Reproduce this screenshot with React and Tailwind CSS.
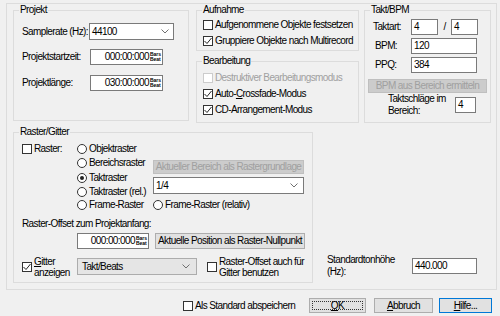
import React from "react";

function Check({ checked, disabled }) {
  return (
    <span
      className={`flex h-[10px] w-[10px] shrink-0 items-center justify-center border bg-white ${
        disabled ? "border-[#cccccc]" : "border-[#333333]"
      }`}
    >
      {checked && (
        <svg width="8" height="8" viewBox="0 0 8 8">
          <path d="M0.5 4 L3 6.5 L7.5 1" fill="none" stroke="#222222" strokeWidth="1" />
        </svg>
      )}
    </span>
  );
}

function Radio({ selected }) {
  return (
    <span className="flex h-[10px] w-[10px] shrink-0 items-center justify-center rounded-full border border-[#333333] bg-white">
      {selected && <span className="h-[4px] w-[4px] rounded-full bg-[#222222]" />}
    </span>
  );
}

function Chevron() {
  return (
    <svg width="8" height="5" viewBox="0 0 8 5">
      <path d="M0.5 0.5 L4 4 L7.5 0.5" fill="none" stroke="#707070" strokeWidth="1" />
    </svg>
  );
}

function TimeField({ value, className }) {
  return (
    <div className={`flex h-[16px] items-center justify-end border border-[#7a7a7a] bg-white pr-[1px] ${className}`}>
      <span>{value}</span>
      <span className="ml-[1px] flex flex-col text-[5px] font-bold leading-[5px] tracking-normal">
        <span>Bars</span>
        <span>Beat</span>
      </span>
    </div>
  );
}

function Input({ value, className }) {
  return (
    <div className={`flex h-[16px] items-center border border-[#7a7a7a] bg-white pl-[2px] ${className}`}>
      {value}
    </div>
  );
}

function Group({ title, className, children }) {
  return (
    <fieldset className={`shrink-0 border border-[#dcdcdc] p-0 ${className}`}>
      <legend className="ml-[5px] px-[1px] leading-[12px]">{title}</legend>
      {children}
    </fieldset>
  );
}

function CheckRow({ label, checked, disabled, className }) {
  return (
    <div className={`flex h-[16px] items-center gap-[2px] ${className || ""}`}>
      <Check checked={checked} disabled={disabled} />
      <span className={disabled ? "text-[#a0a0a0]" : ""}>{label}</span>
    </div>
  );
}

function RadioRow({ label, selected, className }) {
  return (
    <div className={`flex items-center gap-[2px] ${className}`}>
      <Radio selected={selected} />
      <span>{label}</span>
    </div>
  );
}

export default function App() {
  return (
    <div className="h-[316px] w-[500px] overflow-hidden bg-[#f0f0f0] pt-[3px] font-['Liberation_Sans',Arial,sans-serif] text-[10px] leading-[12px] tracking-[-0.6px] text-black">
      <div className="ml-[6px] h-[287px] w-[491px] border border-[#dcdcdc] pl-[6px]">
        {/* top row */}
        <div className="flex items-start">
          <Group title="Projekt" className="h-[117px] w-[176px]">
            <div className="pl-[8px]">
              <div className="mt-[7px] flex h-[17px] items-center">
                <span className="w-[67px]">Samplerate (Hz):</span>
                <div className="flex h-[17px] w-[85px] items-center justify-between border border-[#7a7a7a] bg-white pl-[2px] pr-[4px]">
                  <span>44100</span>
                  <Chevron />
                </div>
              </div>
              <div className="mt-[9px] flex h-[16px] items-center">
                <span className="w-[68px]">Projektstartzeit:</span>
                <TimeField value="000:00:000" className="w-[73px]" />
              </div>
              <div className="mt-[10px] flex h-[16px] items-center">
                <span className="w-[68px]">Projektlänge:</span>
                <TimeField value="030:00:000" className="w-[73px]" />
              </div>
            </div>
          </Group>

          <div className="ml-[7px] flex w-[163px] flex-col">
            <Group title="Aufnahme" className="h-[47px] w-[163px]">
              <div className="pl-[6px] pt-[1px]">
                <CheckRow label="Aufgenommene Objekte festsetzen" />
                <CheckRow label="Gruppiere Objekte nach Multirecord" checked />
              </div>
            </Group>
            <Group title="Bearbeitung" className="mt-[4px] h-[68px] w-[163px]">
              <div className="pl-[6px] pt-[3px]">
                <CheckRow label="Destruktiver Bearbeitungsmodus" disabled />
                <CheckRow
                  checked
                  label={
                    <>
                      Auto-<span className="underline">C</span>rossfade-Modus
                    </>
                  }
                />
                <CheckRow label="CD-Arrangement-Modus" checked />
              </div>
            </Group>
          </div>

          <Group title="Takt/BPM" className="ml-[5px] h-[119px] w-[126px]">
            <div className="px-[3px]">
              <div className="mt-[3px] flex h-[16px] items-center pl-[5px]">
                <span className="w-[38px]">Taktart:</span>
                <Input value="4" className="w-[27px]" />
                <span className="w-[13px] text-center">/</span>
                <Input value="4" className="w-[27px]" />
              </div>
              <div className="mt-[3px] flex h-[16px] items-center pl-[5px]">
                <span className="w-[38px] pl-[2px]">BPM:</span>
                <Input value="120" className="w-[66px]" />
              </div>
              <div className="mt-[3px] flex h-[16px] items-center pl-[5px]">
                <span className="w-[38px] pl-[2px]">PPQ:</span>
                <Input value="384" className="w-[66px]" />
              </div>
              <div className="mt-[6px] flex h-[14px] w-[119px] items-center justify-center border border-[#bfbfbf] bg-[#cccccc] text-[#a0a0a0]">
                BPM aus Bereich ermitteln
              </div>
              <div className="mt-[4px] flex h-[16px] items-center pl-[20px]">
                <span className="w-[67px] leading-[12px]">
                  Taktschläge im
                  <br />
                  Bereich:
                </span>
                <Input value="4" className="w-[21px]" />
              </div>
            </div>
          </Group>
        </div>

        {/* raster row */}
        <div className="mt-[3px] flex items-end">
          <Group title="Raster/Gitter" className="h-[157px] w-[300px]">
            <div className="pl-[8px]">
              <div className="mt-[3px] flex">
                <div className="w-[55px]">
                  <div className="flex h-[15px] items-center gap-[2px]">
                    <Check />
                    <span>Raster:</span>
                  </div>
                </div>
                <div className="flex w-[76px] flex-col">
                  <RadioRow label="Objektraster" className="h-[15px]" />
                  <RadioRow label="Bereichsraster" className="h-[14px]" />
                  <RadioRow label="Taktraster" selected className="h-[15px]" />
                  <RadioRow label="Taktraster (rel.)" className="h-[14px]" />
                  <RadioRow label="Frame-Raster" className="h-[12px]" />
                </div>
                <div className="flex w-[151px] flex-col">
                  <div className="mt-[19px] flex h-[14px] items-center justify-center border border-[#bfbfbf] bg-[#cccccc] text-[#a0a0a0]">
                    Aktueller Bereich als Rastergrundlage
                  </div>
                  <div className="mt-[3px] flex h-[17px] items-center justify-between border border-[#7a7a7a] bg-white pl-[2px] pr-[5px]">
                    <span>1/4</span>
                    <Chevron />
                  </div>
                  <RadioRow label="Frame-Raster (relativ)" className="mt-[5px] h-[12px]" />
                </div>
              </div>

              <div className="mt-[7px] flex h-[12px] items-center">Raster-Offset zum Projektanfang:</div>

              <div className="mt-[3px] flex h-[16px] items-center">
                <TimeField value="000:00:000" className="ml-[55px] w-[72px]" />
                <div className="ml-[6px] flex h-[16px] w-[150px] items-center justify-center border border-[#adadad] bg-[#e1e1e1]">
                  Aktuelle Position als Raster-Nullpunkt
                </div>
              </div>

              <div className="mt-[9px] flex h-[17px] items-center">
                <div className="flex w-[55px] items-center gap-[2px]">
                  <Check checked />
                  <span className="leading-[11px]">
                    <span className="underline">G</span>itter
                    <br />
                    anzeigen
                  </span>
                </div>
                <div className="flex h-[17px] w-[120px] items-center justify-between border border-[#acacac] bg-[#e5e5e5] pl-[4px] pr-[6px]">
                  <span>Takt/Beats</span>
                  <Chevron />
                </div>
                <div className="ml-[10px] flex items-center gap-[2px]">
                  <Check />
                  <span className="leading-[11px]">
                    Raster-Offset auch für
                    <br />
                    Gitter benutzen
                  </span>
                </div>
              </div>
            </div>
          </Group>

          <div className="mb-[5px] ml-[14px] flex items-center">
            <span className="w-[85px] leading-[12px]">
              Standardtonhöhe
              <br />
              (Hz):
            </span>
            <Input value="440.000" className="w-[65px]" />
          </div>
        </div>
      </div>

      {/* bottom buttons */}
      <div className="mt-[8px] flex h-[15px] items-center pl-[183px] pr-[8px]">
        <div className="flex items-center gap-[2px]">
          <Check />
          <span>Als Standard abspeichern</span>
        </div>
        <div className="ml-auto flex h-[15px] w-[57px] items-center justify-center border border-[#adadad] bg-[#e1e1e1] p-[2px]">
          <div className="flex h-full w-full items-center justify-center border border-dotted border-[#333333]">
            <span className="underline">O</span>K
          </div>
        </div>
        <div className="ml-[8px] flex h-[15px] w-[59px] items-center justify-center border border-[#adadad] bg-[#e1e1e1]">
          <span>
            <span className="underline">A</span>bbruch
          </span>
        </div>
        <div className="ml-[6px] flex h-[15px] w-[53px] items-center justify-center border border-[#0078d7] bg-[#e1e1e1]">
          <span>
            <span className="underline">H</span>ilfe...
          </span>
        </div>
      </div>
    </div>
  );
}
